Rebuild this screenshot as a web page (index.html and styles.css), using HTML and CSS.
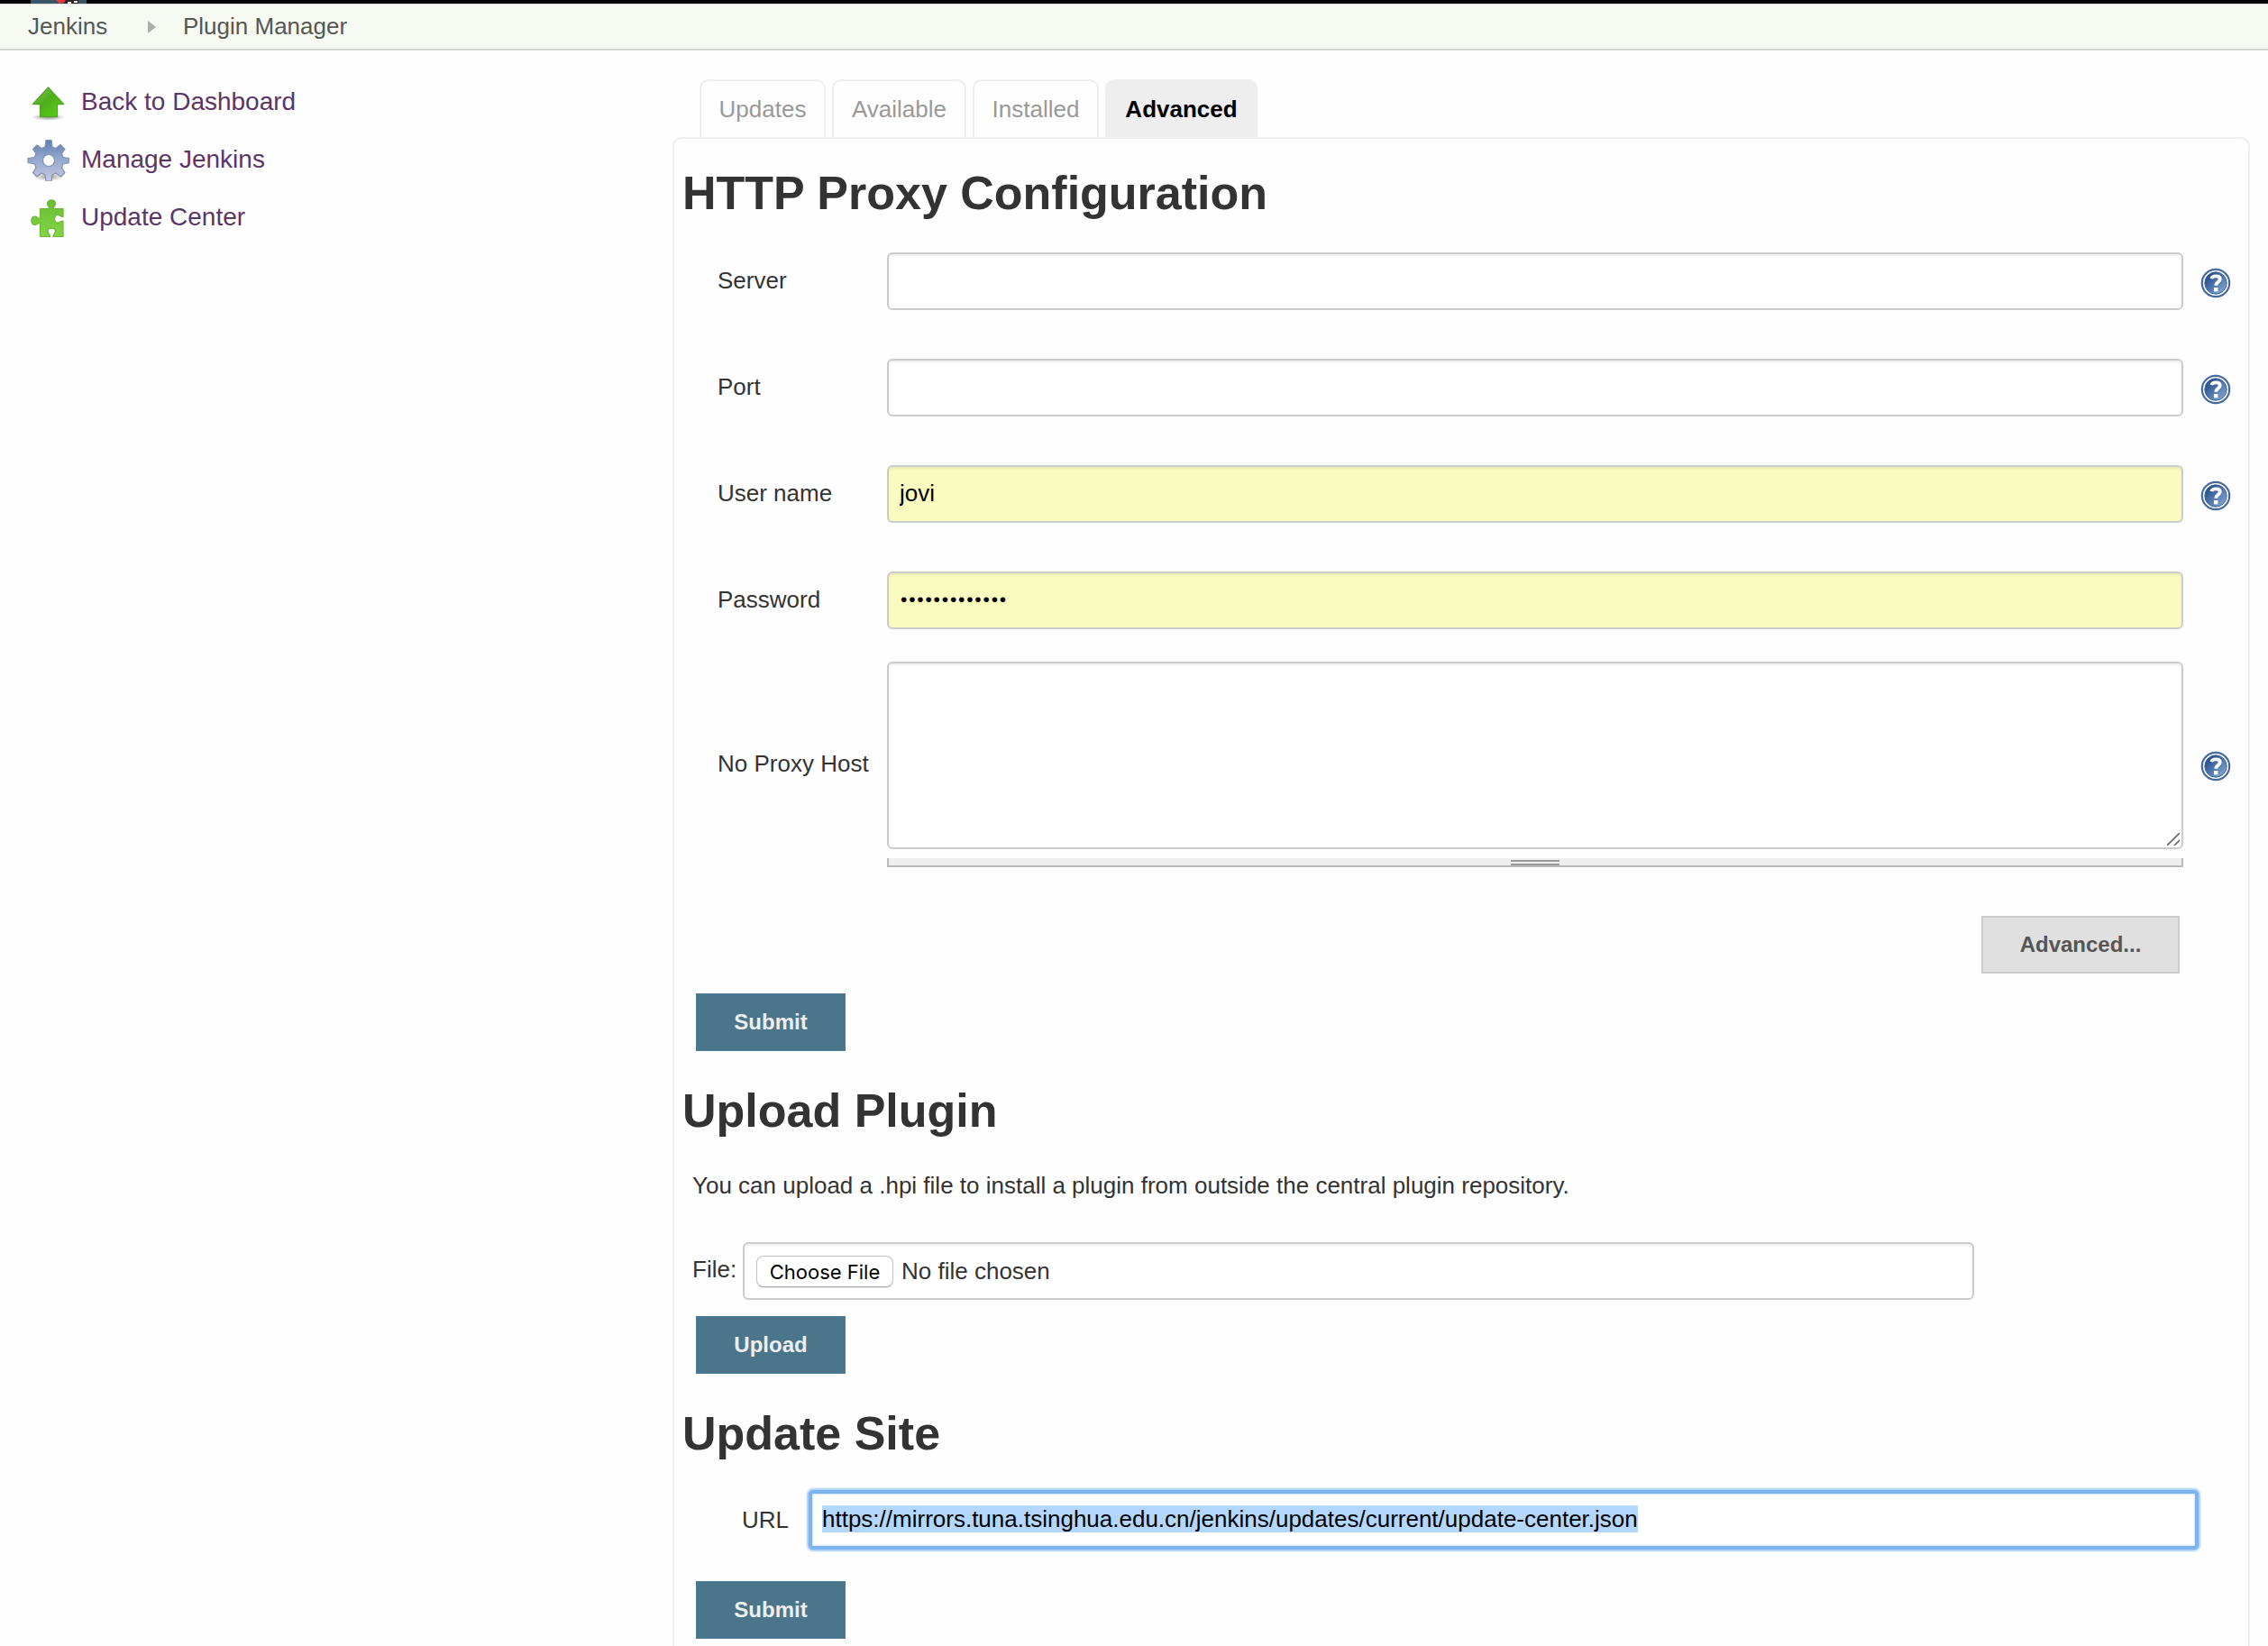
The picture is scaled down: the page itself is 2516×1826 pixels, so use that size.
FILE: index.html
```html
<!DOCTYPE html>
<html lang="en">
<head>
<meta charset="utf-8">
<title>Plugin Manager [Jenkins]</title>
<link rel="stylesheet" href="styles.css">
</head>
<body>
<svg class="defs" width="0" height="0" aria-hidden="true">
  <defs>
    <linearGradient id="arrowFill" x1="0" y1="0" x2="1" y2="1"><stop offset="0" stop-color="#86c850"/><stop offset=".45" stop-color="#4fae1c"/><stop offset="1" stop-color="#5bd411"/></linearGradient>
    <linearGradient id="gearFill" x1="0" y1="0" x2="0" y2="1"><stop offset="0" stop-color="#5e7fae"/><stop offset=".4" stop-color="#8da3cc"/><stop offset="1" stop-color="#cac9e6"/></linearGradient>
    <linearGradient id="pieceFill" x1="0" y1="0" x2="0" y2="1"><stop offset="0" stop-color="#69bd32"/><stop offset="1" stop-color="#84d546"/></linearGradient>
    <linearGradient id="helpFill" x1="0" y1="0" x2="1" y2="1"><stop offset=".2" stop-color="#2c5390"/><stop offset="1" stop-color="#8db0da"/></linearGradient>
    <radialGradient id="shade"><stop offset="0" stop-color="#000" stop-opacity=".4"/><stop offset="1" stop-color="#000" stop-opacity="0"/></radialGradient>
    <symbol id="help" viewBox="0 0 34 34">
      <circle cx="17" cy="17" r="15.2" fill="#fff" stroke="#46699f" stroke-width="2.2"/>
      <circle cx="17" cy="17" r="12.2" fill="url(#helpFill)" stroke="#3d639c" stroke-width="1"/>
      <path d="M12.3 12.2C13 8.6 21.6 8 21.8 12.6C21.9 15.7 17.2 15.8 17.2 19.8" fill="none" stroke="#fff" stroke-width="3.8"/>
      <rect x="15" y="22" width="4.400" height="4.400" fill="#fff"/>
    </symbol>
  </defs>
</svg>

<header class="top">
  <svg class="logo" width="62" height="4" viewBox="0 0 62 4"><path fill="#3a5566" d="M0 0h62v4H0z"/><path fill="#e53a36" d="M28 0h12l-4 3-4 1z"/><path fill="#2a2326" d="M39 0h14v4H37z"/><path fill="#f1e6e2" d="M41 2h4v2h-4zM48 1h4v2h-4z"/></svg>
</header>
<nav class="crumbs">
  <a class="crumb">Jenkins</a>
  <svg width="9" height="14" viewBox="0 0 9 14"><path d="M0 0L9 7L0 14z" fill="#adb0a9"/></svg>
  <a class="crumb">Plugin Manager</a>
</nav>

<div class="page">
  <aside class="side">
    <a class="task">
      <svg width="48" height="48" viewBox="0 0 48 48"><ellipse cx="24.500" cy="41" rx="19" ry="4" fill="url(#shade)"/><path d="M24.500 8L41.500 26.500H34.500V40.500H15.500V26.500H7.500Z" fill="url(#arrowFill)" stroke="#55a42a" stroke-width="1.300" stroke-linejoin="round"/></svg>
      <span>Back to Dashboard</span>
    </a>
    <a class="task">
      <svg width="48" height="48" viewBox="0 0 48 48"><ellipse cx="25" cy="43" rx="17" ry="5" fill="url(#shade)"/><path fill-rule="evenodd" fill="url(#gearFill)" stroke="#8190ad" stroke-width="1.200" stroke-linejoin="round" d="M22 2.500H28L29 10L33 11.500L38 7.500L43 12.500L39.500 17.500L41 21.500L48 22.500V27.500L41 29L39.500 33L43 38.500L38.500 43L33 39L29 41L28 48H22L21 41L17 39L12 43L7.500 38.500L11 33L9.500 29L2 27.500V22.500L9.500 21.500L11 17.500L7.500 12.500L12 8L17 11.500L21 10ZM25 18.500A6.500 6.500 0 1 0 25 31.500A6.500 6.500 0 1 0 25 18.500Z"/></svg>
      <span>Manage Jenkins</span>
    </a>
    <a class="task">
      <svg width="48" height="48" viewBox="0 0 48 48"><path fill="url(#pieceFill)" stroke="#69b838" stroke-width="1.200" stroke-linejoin="round" d="M15.500 14.500H25.500C25.500 11.500 23.500 11.500 23.500 9C23.500 3.500 32.500 3.500 32.500 9C32.500 11.500 30.500 11.500 30.500 14.500H41V23.500C38 23.500 37 21.500 35 21.500C30.500 21.500 30.500 30 35 30C37 30 38 28 41 28V45.500H30C30 42.500 32.500 42 32.500 39.500C32.500 35 24 35 24 39.500C24 42 26.500 42.500 26.500 45.500H15.500V30C12.500 30 12.500 32.500 10 32.500C4.500 32.500 4.500 23 10 23C12.500 23 12.500 25.500 15.500 25.500Z"/></svg>
      <span>Update Center</span>
    </a>
  </aside>

  <main class="main">
    <div class="tabs">
      <a class="tab">Updates</a>
      <a class="tab tab-wide">Available</a>
      <a class="tab">Installed</a>
      <a class="tab tab-active">Advanced</a>
    </div>
    <div class="panel">
      <h1 class="title">HTTP Proxy Configuration</h1>
      <form class="proxy">
        <div class="row"><label>Server</label><input class="field" type="text"><svg class="help"><use href="#help"/></svg></div>
        <div class="row"><label>Port</label><input class="field" type="text"><svg class="help"><use href="#help"/></svg></div>
        <div class="row"><label>User name</label><input class="field filled" type="text" value="jovi"><svg class="help"><use href="#help"/></svg></div>
        <div class="row"><label>Password</label><input class="field filled password" type="password" value="abcdefghijklm"></div>
        <div class="row row-area">
          <label>No Proxy Host</label>
          <div class="area">
            <div class="field textarea"><svg width="14" height="14" viewBox="0 0 14 14"><path d="M0 14L14 0M8 14L14 8" stroke="#666" stroke-width="1.600"/></svg></div>
            <div class="handle"><span class="grip"></span></div>
          </div>
          <svg class="help"><use href="#help"/></svg>
        </div>
      </form>
      <div class="more"><button class="btn btn-gray">Advanced...</button></div>
      <button class="btn">Submit</button>

      <h1 class="title title-upload">Upload Plugin</h1>
      <p class="note">You can upload a .hpi file to install a plugin from outside the central plugin repository.</p>
      <div class="file">
        <label>File:</label>
        <div class="field file-box"><span class="choose">Choose File</span><span>No file chosen</span></div>
      </div>
      <button class="btn">Upload</button>

      <h1 class="title title-site">Update Site</h1>
      <div class="site">
        <label>URL</label>
        <div class="url"><span class="selected">https://mirrors.tuna.tsinghua.edu.cn/jenkins/updates/current/update-center.json</span></div>
      </div>
      <button class="btn">Submit</button>
    </div>
  </main>
</div>
</body>
</html>
```
FILE: styles.css
```css
* { box-sizing: border-box; }
html, body { margin: 0; height: 1826px; overflow: hidden; }
body {
  background: #fefefe;
  color: #333;
  font: 26px/30px "Liberation Sans", Arial, sans-serif;
}
svg { display: block; flex: none; }
.defs { position: absolute; }

.top { height: 4px; padding-left: 34px; background: #000; }
.crumbs {
  display: flex;
  align-items: center;
  height: 52px;
  padding: 0 0 1px 31px;
  background: #f6faf2;
  border-top: 1px solid #dde0da;
  border-bottom: 2px solid #d3d7cf;
  color: #555753;
}
.crumbs svg { margin: 2px 30px 0 45px; }
.crumb:first-child { width: 88px; }

.page { display: flex; height: 1770px; }
.side { width: 746px; padding: 33px 0 0 29px; }
.task {
  display: flex;
  align-items: center;
  gap: 13px;
  height: 48px;
  margin-bottom: 16px;
  color: #5c3566;
  font-size: 28px;
}

.main { width: 1750px; padding-top: 32px; }
.tabs { display: flex; gap: 7px; height: 64px; padding-left: 30px; }
.tab {
  width: 140px;
  height: 64px;
  border: 2px solid #eee;
  border-bottom: 0;
  border-radius: 10px 10px 0 0;
  color: #999;
  line-height: 62px;
  text-align: center;
}
.tab-wide { width: 149px; }
.tab-active { width: 169px; background: #eee; color: #000; font-weight: bold; }

.panel {
  height: 1700px;
  padding: 0 20px 0 24px;
  border: 2px solid #eee;
  border-radius: 10px;
}
.title { margin: 0 0 0 -15px; font-size: 52px; line-height: 60px; white-space: nowrap; }
.panel > .title:first-child { padding-top: 30px; }

.proxy { display: flex; flex-direction: column; gap: 54px; padding: 36px 0 0 24px; }
.row { display: flex; align-items: center; height: 64px; }
.row label { flex: none; width: 188px; padding-bottom: 3px; white-space: nowrap; }
.field {
  flex: none;
  width: 1438px;
  height: 64px;
  padding: 0 12px 2px;
  border: 2px solid #ccc;
  border-radius: 6px;
  background: #fff;
  box-shadow: inset 0 2px 3px rgba(0, 0, 0, .07);
  font: inherit;
  color: #000;
  outline: 0;
}
.filled { background: #fafbbf; }
.password { padding-left: 13px; font-size: 21px; letter-spacing: 1.8px; }
.help { width: 34px; height: 34px; margin: 4px 0 0 19px; }
.row-area { height: 228px; margin-top: -18px; align-items: flex-start; }
.row-area label { margin-top: 98px; }
.row-area .help { margin-top: 99px; }
.area { flex: none; }
.textarea { display: flex; align-items: flex-end; justify-content: flex-end; height: 208px; padding: 2px; }
.handle {
  display: flex;
  justify-content: center;
  height: 10px;
  margin-top: 10px;
  padding-top: 2px;
  background: #eee;
  border: 2px solid #bbb;
  border-top: 0;
}
.grip { width: 54px; height: 6px; border: solid #999; border-width: 2px 0; }

.more { display: flex; justify-content: flex-end; padding: 54px 56px 22px 0; }
.btn {
  display: block;
  width: 166px;
  height: 64px;
  padding: 0 0 1px;
  border: 1px solid #4d7e97;
  background: #4b758b;
  color: #eee;
  font: bold 24px/60px "Liberation Sans", Arial, sans-serif;
}
.btn-gray { width: 220px; border: 2px solid #ccc; background: #e0e0e0; color: #555; }

.title-upload { padding-top: 36px; }
.note { margin: 38px 0 0 -4px; }
.file { display: flex; margin: 48px 0 18px -4px; line-height: 61px; }
.file label { width: 56px; }
.file-box { display: flex; align-items: center; gap: 9px; width: 1366px; padding: 0 13px 0; color: #333; line-height: 60px; }
.choose {
  width: 152px;
  height: 35px;
  border: 1px solid #c4c4c4;
  border-bottom-color: #aaa;
  border-radius: 8px;
  background: #fff;
  box-shadow: 0 1px 1px rgba(0, 0, 0, .12);
  color: #000;
  font: 22px/34px Inter, sans-serif;
  text-align: center;
}

.title-site { padding-top: 36px; }
.site { display: flex; align-items: center; margin: 34px 0 36px 51px; height: 64px; }
.site label { width: 74px; padding-bottom: 1px; }
.url {
  width: 1542px;
  height: 66px;
  padding: 13px 11px;
  border: 4px solid #7db3ee;
  border-radius: 5px;
  background: #fff;
  box-shadow: 0 0 2px 2px #a9d0fa, inset 0 0 2px 1px #d3e7fd;
  color: #000;
  line-height: 30px;
}
.selected { display: inline-block; background: #b3d7ff; line-height: 30px; }
```
